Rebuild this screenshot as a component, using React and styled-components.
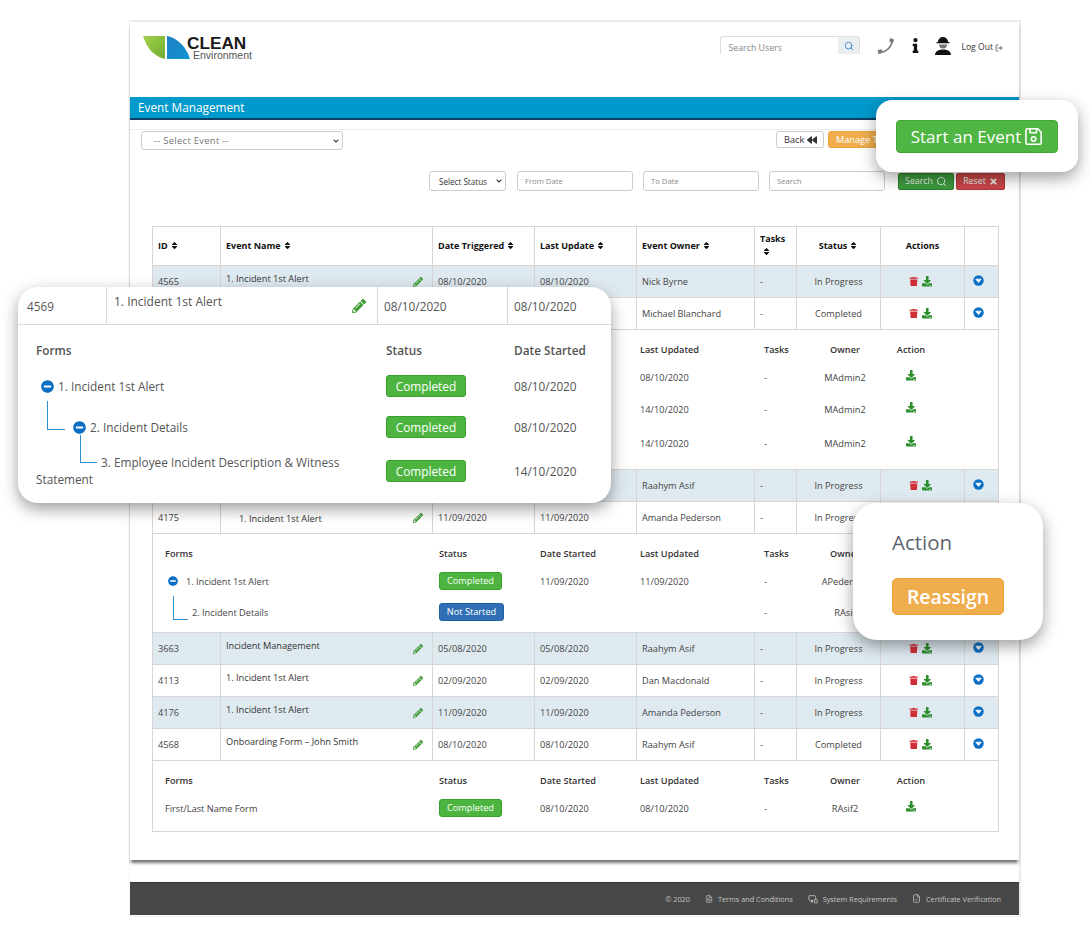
import React from "react";
import styled, { createGlobalStyle } from "styled-components";
import { FaTrash, FaSort, FaPencilAlt, FaBackward, FaTimes, FaMinusCircle, FaInfo, FaDownload, FaChevronDown } from "react-icons/fa";
import { Search, LogOut, FileText, MonitorSmartphone, FileCheck } from "lucide-react";

const GlobalStyle = createGlobalStyle`
  html, body { margin: 0; padding: 0; background: #fff; }
  body { font-family: "Open Sans", "Noto Sans", sans-serif; color: #444; }
  * { box-sizing: border-box; }
`;

const Stage = styled.div`
  position: relative;
  width: 1090px;
  height: 937px;
  overflow: hidden;
  padding: 20px 0 0 129px;
`;
const Frame = styled.div`
  width: 892px;
  height: 897px;
  border-top: 2px solid #ececec;
  border-right: 2px solid #ececec;
  border-left: 1px solid #f2f2f2;
  border-bottom: 1px solid #f2f2f2;
  display: flex;
  flex-direction: column;
`;
const Sheet = styled.div`
  height: 838px;
  background: #fff;
  box-shadow: 0 4px 3px -1px rgba(0, 0, 0, 0.55);
`;
const Header = styled.header`
  height: 75px;
  display: flex;
  justify-content: space-between;
  align-items: flex-start;
  padding: 14px 16px 0 13px;
`;
const LogoBox = styled.div`
  position: relative;
  width: 112px;
  height: 26px;
`;
const LogoClean = styled.span`
  position: absolute;
  left: 44px;
  top: 0;
  font: 700 17.2px/14px "Liberation Sans", Arial, sans-serif;
  color: #1a1a1a;
`;
const LogoEnv = styled.span`
  position: absolute;
  left: 50px;
  top: 14px;
  font: 400 10.5px/10px "Liberation Sans", Arial, sans-serif;
  color: #555;
`;
const HeaderRight = styled.div`
  display: flex;
  align-items: flex-start;
`;
const UserSearch = styled.div`
  width: 140px;
  height: 18px;
  margin-right: -1px;
  display: flex;
  border: 1px solid #ddd;
  border-bottom: 0;
  border-radius: 3px 3px 0 0;
`;
const UserInput = styled.input`
  flex: 1;
  min-width: 0;
  border: 0;
  outline: 0;
  padding: 4px 0 0 7px;
  font: 400 8.8px "Open Sans", sans-serif;
  background: transparent;
  &::placeholder { color: #888; opacity: 1; }
`;
const UserSearchBtn = styled.span`
  width: 21px;
  display: flex;
  align-items: center;
  justify-content: center;
  background: #e9eef1;
  color: #2f7fc1;
`;
const HeaderIcon = styled.span`
  display: flex;
  margin-left: ${(p) => p.$ml}px;
  margin-top: ${(p) => p.$mt}px;
  color: #111;
`;
const LogOutLink = styled.span`
  display: flex;
  align-items: center;
  gap: 2px;
  margin: 6px 0 0 9px;
  font-size: 8.6px;
  line-height: 11px;
  color: #333;
  white-space: nowrap;
`;
const TitleBar = styled.div`
  height: 23px;
  background: #0099cc;
  border-bottom: 2px solid #0d3f66;
  color: #fff;
  font-size: 11.8px;
  line-height: 21px;
  padding-left: 8px;
`;
const Toolbar = styled.div`
  margin-top: 9px;
  padding: 1px 131px 0 11px;
  border-top: 1px solid #eeeeee;
  display: flex;
  justify-content: space-between;
  align-items: flex-start;
`;
const SelectWrap = styled.div`
  position: relative;
  flex: none;
  margin-right: ${(p) => p.$mr || 0}px;
`;
const SelectArrow = styled(FaChevronDown)`
  position: absolute;
  right: 4px;
  top: 50%;
  margin-top: -3px;
  font-size: 6px;
  color: #222;
  pointer-events: none;
`;
const EventSelect = styled.select`
  display: block;
  appearance: none;
  width: 202px;
  height: 19px;
  padding: 0 0 1px 12px;
  border: 1px solid #ccc;
  border-radius: 3px;
  background: #fff;
  color: #777;
  font: 400 9.4px "Open Sans", sans-serif;
  letter-spacing: 0.3px;
`;
const ToolButtons = styled.div`
  display: flex;
  gap: 4px;
`;
const ToolButton = styled.button`
  width: ${(p) => p.$w}px;
  height: 17px;
  padding: 0 0 0 7px;
  display: flex;
  align-items: center;
  gap: 3px;
  white-space: nowrap;
  overflow: hidden;
  border-radius: 3px;
  font: 400 9.2px "Open Sans", sans-serif;
  border: 1px solid ${(p) => p.$border};
  background: ${(p) => p.$bg};
  color: ${(p) => p.$fg};
`;
const FilterRow = styled.div`
  margin-top: 21px;
  padding-right: 14px;
  display: flex;
  justify-content: flex-end;
  align-items: center;
  gap: 10px;
`;
const StatusSelect = styled.select`
  display: block;
  appearance: none;
  width: 77px;
  height: 20px;
  padding: 0 0 0 9px;
  border: 1px solid #ccc;
  border-radius: 3px;
  background: #fff;
  color: #333;
  font: 400 8.1px "Open Sans", sans-serif;
`;
const FilterInput = styled.input`
  width: 116px;
  height: 20px;
  padding: 0 0 0 7px;
  border: 1px solid #ccc;
  border-radius: 3px;
  font: 400 7.7px "Open Sans", sans-serif;
  &::placeholder { color: #888; opacity: 1; }
`;
const FilterButtons = styled.div`
  display: flex;
  gap: 2px;
  margin-left: 3px;
`;
const FilterButton = styled.button`
  width: ${(p) => p.$w}px;
  height: 17px;
  padding: 0;
  display: flex;
  align-items: center;
  justify-content: center;
  gap: 3px;
  border-radius: 2px;
  font: 400 8.8px "Open Sans", sans-serif;
  color: #e9f3e9;
  border: 1px solid ${(p) => p.$border};
  background: ${(p) => p.$bg};
`;
const Table = styled.table`
  margin: 35px 0 0 22px;
  width: 846px;
  table-layout: fixed;
  border-collapse: collapse;
  border: 1px solid #d6d0d0;
  font-size: 9.2px;
`;
const Th = styled.th`
  height: 39px;
  padding: 0 5px 2px;
  border: 1px solid #dad5d5;
  text-align: ${(p) => (p.$center ? "center" : "left")};
  font-weight: 700;
  color: #111;
  font-size: 9px;
  line-height: 13px;
`;
const SortIcon = styled(FaSort)`
  font-size: 9px;
  margin-left: 2px;
  vertical-align: -1px;
`;
const Row = styled.tr`
  background: ${(p) => (p.$tint ? "#dfeaf0" : "#fff")};
`;
const Td = styled.td`
  height: 32px;
  padding: 0 5px;
  border: 1px solid #dad5d5;
  text-align: ${(p) => (p.$center ? "center" : "left")};
  color: #444;
  white-space: nowrap;
`;
const ToggleCell = styled(Td)`
  text-align: center;
  padding: 0 9px 0 3px;
`;
const NameWrap = styled.div`
  display: flex;
  align-items: center;
  justify-content: space-between;
  padding: 0 4px 0 ${(p) => (p.$indent ? 13 : 0)}px;
`;
const NameText = styled.span`
  color: #333;
  margin-top: ${(p) => (p.$indent ? 2 : -6)}px;
`;
const Pencil = styled(FaPencilAlt)`
  color: #3f9d35;
  font-size: ${(p) => p.$size || 10}px;
  flex: none;
`;
const ActionIcons = styled.div`
  display: flex;
  justify-content: center;
  align-items: center;
  gap: 3px;
  padding-right: 4px;
`;
const Trash = styled(FaTrash)`
  color: #cf2e36;
  font-size: 9.5px;
`;
const Save2 = styled(FaDownload)`
  color: #2c8f2c;
  font-size: 10.5px;
`;
const DetailCell = styled.td`
  padding: 5px 0 ${(p) => p.$pb}px 12px;
  border: 1px solid #dad5d5;
  background: #fff;
`;
const FormRow = styled.div`
  display: grid;
  grid-template-columns: 274px 101px 100px 124px 49px 64px auto;
  align-items: center;
  height: 28px;
  margin-top: ${(p) => p.$mt || 0}px;
  font-weight: ${(p) => (p.$head ? 600 : 400)};
  color: ${(p) => (p.$head ? "#333" : "#444")};
  white-space: nowrap;
`;
const FormName = styled.div`
  position: relative;
  display: flex;
  align-items: center;
  gap: 8px;
  padding-left: ${(p) => p.$pl || 0}px;
`;
const TreeLine = styled.span`
  position: absolute;
  left: ${(p) => p.$l}px;
  top: ${(p) => p.$t}px;
  width: ${(p) => p.$w}px;
  height: ${(p) => p.$h}px;
  border-left: ${(p) => p.$s || 1}px solid #2b8fd6;
  border-bottom: ${(p) => p.$s || 1}px solid #2b8fd6;
`;
const MinusIcon = styled(FaMinusCircle)`
  color: #0b6fc4;
  font-size: ${(p) => p.$size || 10}px;
  flex: none;
`;
const Centered = styled.div`
  text-align: center;
`;
const ActionCol = styled.div`
  width: 30px;
  margin-left: 19px;
  text-align: center;
`;
const Badge = styled.span`
  display: inline-block;
  width: ${(p) => p.$w}px;
  height: 18px;
  border-radius: 3px;
  text-align: center;
  line-height: 16px;
  color: #fff;
  font-size: 9.2px;
  border: 1px solid ${(p) => (p.$blue ? "#22609f" : "#39a02f")};
  background: ${(p) => (p.$blue ? "#2f70b5" : "#4db53f")};
`;
const Gap = styled.div`
  flex: none;
  height: 22px;
`;
const Footer = styled.footer`
  height: 33px;
  background: #484848;
  border-top: 1px solid #333;
  display: flex;
  justify-content: flex-end;
  align-items: center;
  gap: 15px;
  padding: 0 18px 1px 0;
  color: #c4c4c4;
  font-size: 7.3px;
`;
const FooterItem = styled.span`
  display: flex;
  align-items: center;
  gap: 5px;
  white-space: nowrap;
`;
const Card = styled.div`
  position: absolute;
  left: ${(p) => p.$x}px;
  top: ${(p) => p.$y}px;
  width: ${(p) => p.$w}px;
  height: ${(p) => p.$h}px;
  border-radius: ${(p) => p.$r}px;
  background: #fff;
  box-shadow: 0 6px 16px rgba(0, 0, 0, 0.38);
`;
const StartCardInner = styled.div`
  height: 100%;
  display: flex;
  align-items: center;
  justify-content: center;
`;
const StartButton = styled.button`
  width: 162px;
  height: 33px;
  padding: 0;
  display: flex;
  align-items: center;
  justify-content: center;
  gap: 3px;
  border-radius: 4px;
  border: 1px solid #45a53a;
  background: #4fb543;
  color: #fff;
  font: 400 17px "Open Sans", sans-serif;
  white-space: nowrap;
`;
const ReassignInner = styled.div`
  padding: 26px 0 0 39px;
`;
const ActionTitle = styled.div`
  font-size: 20.5px;
  font-weight: 500;
  line-height: 26px;
  color: #5c6470;
`;
const ReassignButton = styled.button`
  display: block;
  margin-top: 23px;
  width: 112px;
  height: 37px;
  padding: 0;
  border-radius: 5px;
  border: 1px solid #eea236;
  background: #f0ad4e;
  color: #fff;
  font: 600 19.4px "Open Sans", sans-serif;
`;
const ZoomTop = styled.div`
  display: grid;
  grid-template-columns: 88px 271px 130px 1fr;
  height: 38px;
  border-bottom: 1px solid #d9d9d9;
  font-size: 11.8px;
  color: #555;
`;
const ZoomCell = styled.div`
  display: flex;
  align-items: center;
  padding: 0 7px 0 ${(p) => (p.$first ? 9 : 6)}px;
  border-left: ${(p) => (p.$first ? "0" : "1px solid #d9d9d9")};
  white-space: nowrap;
`;
const ZoomName = styled(ZoomCell)`
  justify-content: space-between;
  padding-right: 11px;
  padding-left: 7px;
`;
const ZoomNameText = styled.span`
  margin-top: -9px;
  font-size: 12px;
`;
const ZoomBody = styled.div`
  padding: 14px 0 0 18px;
  font-size: 11.8px;
  color: #555;
`;
const ZoomRow = styled.div`
  display: grid;
  grid-template-columns: 350px 128px auto;
  align-items: center;
  min-height: 22px;
  margin-top: ${(p) => p.$mt || 0}px;
  font-weight: ${(p) => (p.$head ? 600 : 400)};
`;
const ZoomName2 = styled.div`
  position: relative;
  display: flex;
  align-items: center;
  gap: 4px;
  padding-left: ${(p) => p.$pl || 0}px;
  white-space: nowrap;
`;
const ZoomWrapName = styled.div`
  position: relative;
  width: 318px;
  text-indent: 65px;
  line-height: 17px;
`;
const ZoomBadge = styled.span`
  display: inline-block;
  width: 80px;
  height: 22px;
  border-radius: 3px;
  text-align: center;
  line-height: 20px;
  color: #fff;
  font-size: 11.8px;
  border: 1px solid #39a02f;
  background: #4db53f;
`;

const CircleDown = () => (
  <svg width="11" height="11" viewBox="0 0 11 11">
    <circle cx="5.5" cy="5.5" r="5.2" fill="#0b6fc4" />
    <path d="M2.8 4.2h5.4L5.5 7.4z" fill="#fff" stroke="#fff" strokeWidth="0.8" strokeLinejoin="round" />
  </svg>
);
const LogoLeaves = () => (
  <svg width="48" height="24" viewBox="0 0 48 24">
    <defs>
      <linearGradient id="lg" x1="0" y1="0" x2="1" y2="1">
        <stop offset="0" stopColor="#a5cf4a" />
        <stop offset="1" stopColor="#6fae32" />
      </linearGradient>
      <linearGradient id="lb" x1="0" y1="0" x2="1" y2="1">
        <stop offset="0" stopColor="#1f7fc4" />
        <stop offset="1" stopColor="#0f95cf" />
      </linearGradient>
    </defs>
    <path d="M0 0H22V23C10 20 4 12 0 0z" fill="url(#lg)" />
    <path d="M24 0V23H47C43 10 34 2 24 0z" fill="url(#lb)" />
  </svg>
);
const PhoneGlyph = () => (
  <svg width="18" height="18" viewBox="0 0 18 18" fill="none" stroke="#777">
    <path d="M15 2.5C15.5 9 10 15 3 15.5" strokeWidth="1.6" />
    <path d="M13.2 1.2l3.6 1.6-1.2 3-2.8-1.2z" fill="#777" strokeWidth="0.5" />
    <path d="M1 13.2l3.6-.8.6 3-3.6 1.6z" fill="#777" strokeWidth="0.5" />
  </svg>
);
const WorkerGlyph = () => (
  <svg width="18" height="20" viewBox="0 0 18 20">
    <path d="M4 7a5 5 0 0 1 10 0h1.5v1.3h-13V7z" fill="#111" />
    <path d="M5 9.5h8a4 4 0 0 1-8 0z" fill="#777" />
    <path d="M1 20c0-4 4-5.6 8-5.6s8 1.6 8 5.6z" fill="#111" />
  </svg>
);
const FloppyGlyph = () => (
  <svg width="19" height="19" viewBox="0 0 19 19" fill="none" stroke="#fff" strokeWidth="1.6" strokeLinejoin="round">
    <path d="M3.5 1.8h10.2l3.5 3.5v10.4a1.6 1.6 0 0 1-1.6 1.6H3.5a1.6 1.6 0 0 1-1.6-1.6V3.4a1.6 1.6 0 0 1 1.6-1.6z" />
    <path d="M6 2v3.8h6.5V2" />
    <circle cx="9.6" cy="12" r="2.2" />
  </svg>
);

const Head = ({ children, center, sort = true }) => (
  <Th $center={center}>{children}{sort && <SortIcon />}</Th>
);

const EventRow = ({ id, name, d1, d2, owner, status, tint, indent }) => (
  <Row $tint={tint}>
    <Td>{id}</Td>
    <Td>
      {name && (
        <NameWrap $indent={indent}>
          <NameText $indent={indent}>{name}</NameText>
          <Pencil />
        </NameWrap>
      )}
    </Td>
    <Td>{d1}</Td>
    <Td>{d2}</Td>
    <Td>{owner}</Td>
    <Td>-</Td>
    <Td $center>{status}</Td>
    <Td><ActionIcons><Trash /><Save2 /></ActionIcons></Td>
    <ToggleCell><CircleDown /></ToggleCell>
  </Row>
);

const FormsHead = ({ covered, noAction }) => (
  <FormRow $head>
    <div>{!covered && "Forms"}</div>
    <div>{!covered && "Status"}</div>
    <div>{!covered && "Date Started"}</div>
    <div>Last Updated</div>
    <div>Tasks</div>
    <Centered>Owner</Centered>
    <ActionCol>{!noAction && "Action"}</ActionCol>
  </FormRow>
);

const CoveredRow = ({ updated, mt }) => (
  <FormRow $mt={mt}>
    <div /><div /><div />
    <div>{updated}</div>
    <div>-</div>
    <Centered>MAdmin2</Centered>
    <ActionCol><Save2 /></ActionCol>
  </FormRow>
);

const App = () => (
  <Stage>
    <GlobalStyle />
    <Frame>
      <Sheet>
        <Header>
          <LogoBox>
            <LogoLeaves />
            <LogoClean>CLEAN</LogoClean>
            <LogoEnv>Environment</LogoEnv>
          </LogoBox>
          <HeaderRight>
            <UserSearch>
              <UserInput placeholder="Search Users" />
              <UserSearchBtn><Search size={10} /></UserSearchBtn>
            </UserSearch>
            <HeaderIcon $ml={18} $mt={1}><PhoneGlyph /></HeaderIcon>
            <HeaderIcon $ml={13} $mt={2}><FaInfo size={15} /></HeaderIcon>
            <HeaderIcon $ml={11} $mt={-1}><WorkerGlyph /></HeaderIcon>
            <LogOutLink>Log Out <LogOut size={8} /></LogOutLink>
          </HeaderRight>
        </Header>
        <TitleBar>Event Management</TitleBar>
        <Toolbar>
          <SelectWrap>
            <EventSelect defaultValue="">
              <option value="">-- Select Event --</option>
            </EventSelect>
            <SelectArrow />
          </SelectWrap>
          <ToolButtons>
            <ToolButton $w={48} $border="#ccc" $bg="#fff" $fg="#333">Back <FaBackward size={10} /></ToolButton>
            <ToolButton $w={60} $border="#eea236" $bg="#f0ad4e" $fg="#fff">Manage T</ToolButton>
          </ToolButtons>
        </Toolbar>
        <FilterRow>
          <SelectWrap $mr={1}>
            <StatusSelect defaultValue="">
              <option value="">Select Status</option>
            </StatusSelect>
            <SelectArrow />
          </SelectWrap>
          <FilterInput placeholder="From Date" />
          <FilterInput placeholder="To Date" />
          <FilterInput placeholder="Search" />
          <FilterButtons>
            <FilterButton $w={56} $border="#2a7f2a" $bg="#3d9a3d">Search <Search size={11} /></FilterButton>
            <FilterButton $w={49} $border="#b23434" $bg="#c9464a">Reset <FaTimes size={9} /></FilterButton>
          </FilterButtons>
        </FilterRow>
        <Table>
          <colgroup>
            <col width="68" /><col width="212" /><col width="102" /><col width="102" />
            <col width="118" /><col width="42" /><col width="84" /><col width="84" /><col width="34" />
          </colgroup>
          <thead>
            <tr>
              <Head>ID</Head>
              <Head>Event Name</Head>
              <Head>Date Triggered</Head>
              <Head>Last Update</Head>
              <Head>Event Owner</Head>
              <Head>Tasks</Head>
              <Head center>Status</Head>
              <Head center sort={false}>Actions</Head>
              <Head sort={false} />
            </tr>
          </thead>
          <tbody>
            <EventRow tint id="4565" name="1. Incident 1st Alert" d1="08/10/2020" d2="08/10/2020" owner="Nick Byrne" status="In Progress" />
            <EventRow owner="Michael Blanchard" status="Completed" />
            <tr>
              <DetailCell colSpan={9} $pb={12}>
                <FormsHead covered />
                <CoveredRow updated="08/10/2020" />
                <CoveredRow updated="14/10/2020" mt={4} />
                <CoveredRow updated="14/10/2020" mt={6} />
              </DetailCell>
            </tr>
            <EventRow tint owner="Raahym Asif" status="In Progress" />
            <EventRow indent id="4175" name="1. Incident 1st Alert" d1="11/09/2020" d2="11/09/2020" owner="Amanda Pederson" status="In Progress" />
            <tr>
              <DetailCell colSpan={9} $pb={6}>
                <FormsHead noAction />
                <FormRow>
                  <FormName $pl={3}><MinusIcon /> 1. Incident 1st Alert</FormName>
                  <div><Badge $w={63}>Completed</Badge></div>
                  <div>11/09/2020</div><div>11/09/2020</div><div>-</div>
                  <Centered>APederson</Centered>
                  <ActionCol />
                </FormRow>
                <FormRow $mt={3}>
                  <FormName $pl={27}>
                    <TreeLine $l={8} $t={-10} $w={15} $h={24} />
                    2. Incident Details
                  </FormName>
                  <div><Badge $w={65} $blue>Not Started</Badge></div>
                  <div /><div /><div>-</div>
                  <Centered>RAsif</Centered>
                  <ActionCol />
                </FormRow>
              </DetailCell>
            </tr>
            <EventRow tint id="3663" name="Incident Management" d1="05/08/2020" d2="05/08/2020" owner="Raahym Asif" status="In Progress" />
            <EventRow id="4113" name="1. Incident 1st Alert" d1="02/09/2020" d2="02/09/2020" owner="Dan Macdonald" status="In Progress" />
            <EventRow tint id="4176" name="1. Incident 1st Alert" d1="11/09/2020" d2="11/09/2020" owner="Amanda Pederson" status="In Progress" />
            <EventRow id="4568" name="Onboarding Form – John Smith" d1="08/10/2020" d2="08/10/2020" owner="Raahym Asif" status="Completed" />
            <tr>
              <DetailCell colSpan={9} $pb={9}>
                <FormsHead />
                <FormRow>
                  <FormName>First/Last Name Form</FormName>
                  <div><Badge $w={63}>Completed</Badge></div>
                  <div>08/10/2020</div><div>08/10/2020</div><div>-</div>
                  <Centered>RAsif2</Centered>
                  <ActionCol><Save2 /></ActionCol>
                </FormRow>
              </DetailCell>
            </tr>
          </tbody>
        </Table>
      </Sheet>
      <Gap />
      <Footer>
        <FooterItem>© 2020</FooterItem>
        <FooterItem><FileText size={8} /> Terms and Conditions</FooterItem>
        <FooterItem><MonitorSmartphone size={10} /> System Requirements</FooterItem>
        <FooterItem><FileCheck size={9} /> Certificate Verification</FooterItem>
      </Footer>
    </Frame>

    <Card $x={876} $y={100} $w={202} $h={72} $r={16}>
      <StartCardInner>
        <StartButton>Start an Event <FloppyGlyph /></StartButton>
      </StartCardInner>
    </Card>

    <Card $x={853} $y={503} $w={190} $h={137} $r={24}>
      <ReassignInner>
        <ActionTitle>Action</ActionTitle>
        <ReassignButton>Reassign</ReassignButton>
      </ReassignInner>
    </Card>

    <Card $x={18} $y={287} $w={593} $h={216} $r={20}>
      <ZoomTop>
        <ZoomCell $first>4569</ZoomCell>
        <ZoomName>
          <ZoomNameText>1. Incident 1st Alert</ZoomNameText>
          <Pencil $size={14} />
        </ZoomName>
        <ZoomCell>08/10/2020</ZoomCell>
        <ZoomCell>08/10/2020</ZoomCell>
      </ZoomTop>
      <ZoomBody>
        <ZoomRow $head>
          <div>Forms</div><div>Status</div><div>Date Started</div>
        </ZoomRow>
        <ZoomRow $mt={14}>
          <ZoomName2 $pl={5}><MinusIcon $size={13} /> 1. Incident 1st Alert</ZoomName2>
          <div><ZoomBadge>Completed</ZoomBadge></div>
          <div>08/10/2020</div>
        </ZoomRow>
        <ZoomRow $mt={19}>
          <ZoomName2 $pl={37}>
            <TreeLine $l={11} $t={-18} $w={18} $h={29} $s={1.5} />
            <MinusIcon $size={13} /> 2. Incident Details
          </ZoomName2>
          <div><ZoomBadge>Completed</ZoomBadge></div>
          <div>08/10/2020</div>
        </ZoomRow>
        <ZoomRow $mt={16}>
          <ZoomWrapName>
            <TreeLine $l={44} $t={-19} $w={17} $h={28} $s={1.5} />
            3. Employee Incident Description &amp; Witness Statement
          </ZoomWrapName>
          <div><ZoomBadge>Completed</ZoomBadge></div>
          <div>14/10/2020</div>
        </ZoomRow>
      </ZoomBody>
    </Card>
  </Stage>
);

export default App;
